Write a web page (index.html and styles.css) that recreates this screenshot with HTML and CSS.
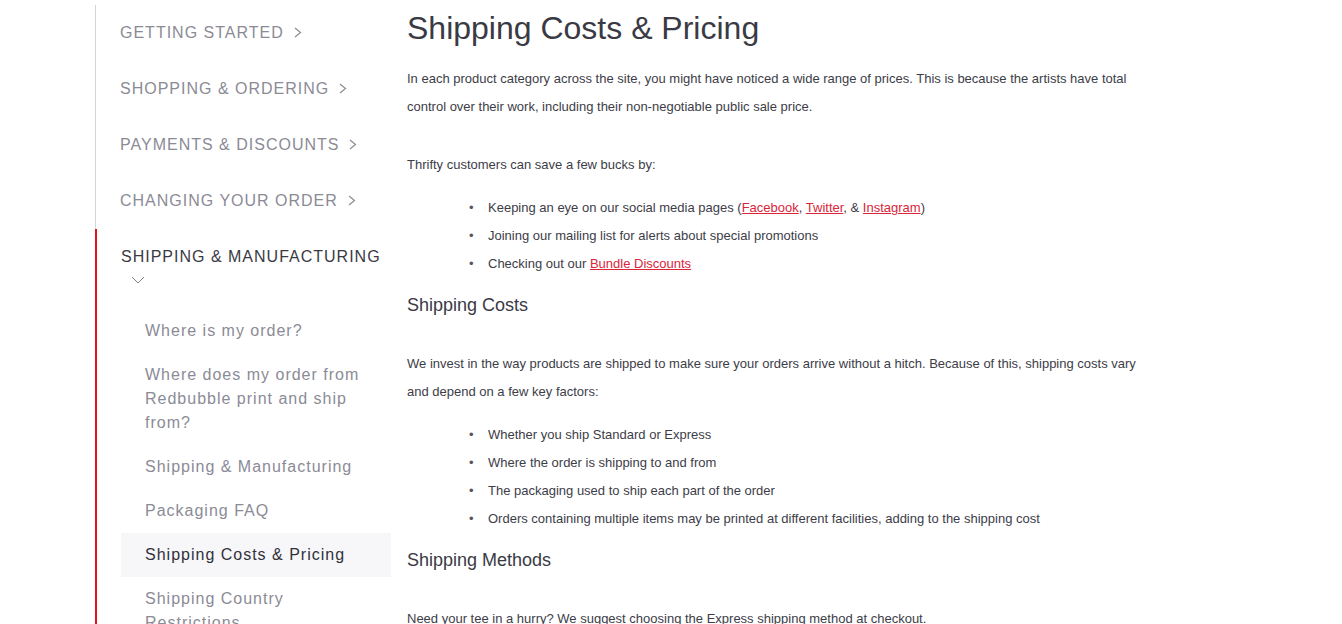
FILE: index.html
```html
<!DOCTYPE html>
<html lang="en">
<head>
    <meta charset="UTF-8">
    <meta name="viewport" content="width=device-width, initial-scale=1.0">
    <title>Shipping Costs &amp; Pricing</title>
    <link rel="stylesheet" href="styles.css">
</head>
<body>
    <div class="page">
        <nav class="sidebar">
            <div class="section">
                <a class="section__title" href="#">GETTING STARTED<svg class="chev" width="8" height="11" viewBox="0 0 8 11"><polyline points="1,1 6.5,5.5 1,10"/></svg></a>
            </div>
            <div class="section">
                <a class="section__title" href="#">SHOPPING &amp; ORDERING<svg class="chev" width="8" height="11" viewBox="0 0 8 11"><polyline points="1,1 6.5,5.5 1,10"/></svg></a>
            </div>
            <div class="section">
                <a class="section__title" href="#">PAYMENTS &amp; DISCOUNTS<svg class="chev" width="8" height="11" viewBox="0 0 8 11"><polyline points="1,1 6.5,5.5 1,10"/></svg></a>
            </div>
            <div class="section">
                <a class="section__title" href="#">CHANGING YOUR ORDER<svg class="chev" width="8" height="11" viewBox="0 0 8 11"><polyline points="1,1 6.5,5.5 1,10"/></svg></a>
            </div>
            <div class="section section_open">
                <a class="section__title" href="#"><span class="nowrap">SHIPPING &amp; MANUFACTURING</span> <svg class="chev chev_down" width="14" height="8" viewBox="0 0 14 8"><polyline points="1,1 7,7 13,1"/></svg></a>
                <ul class="articles">
                    <li><a class="article" href="#">Where is my order?</a></li>
                    <li><a class="article" href="#">Where does my order from Redbubble print and ship from?</a></li>
                    <li><a class="article" href="#">Shipping &amp; Manufacturing</a></li>
                    <li><a class="article" href="#">Packaging FAQ</a></li>
                    <li><a class="article article_current" href="#">Shipping Costs &amp; Pricing</a></li>
                    <li><a class="article" href="#">Shipping Country Restrictions</a></li>
                    <li><a class="article" href="#">Delivery Times</a></li>
                </ul>
            </div>
        </nav>

        <main class="article-body">
            <h1>Shipping Costs &amp; Pricing</h1>
            <p class="lead">In each product category across the site, you might have noticed a wide range of prices. This is because the artists have total control over their work, including their non-negotiable public sale price.</p>
            <p>Thrifty customers can save a few bucks by:</p>
            <ul class="bullets">
                <li>Keeping an eye on our social media pages (<a href="#">Facebook</a>, <a href="#">Twitter</a>, &amp; <a href="#">Instagram</a>)</li>
                <li>Joining our mailing list for alerts about special promotions</li>
                <li>Checking out our <a href="#">Bundle Discounts</a></li>
            </ul>
            <h2>Shipping Costs</h2>
            <p>We invest in the way products are shipped to make sure your orders arrive without a hitch. Because of this, shipping costs vary and depend on a few key factors:</p>
            <ul class="bullets">
                <li>Whether you ship Standard or Express</li>
                <li>Where the order is shipping to and from</li>
                <li>The packaging used to ship each part of the order</li>
                <li>Orders containing multiple items may be printed at different facilities, adding to the shipping cost</li>
            </ul>
            <h2>Shipping Methods</h2>
            <p>Need your tee in a hurry? We suggest choosing the Express shipping method at checkout.</p>
        </main>
    </div>
</body>
</html>
```

FILE: styles.css
```css
body {
    margin: 0;
    background: #fff;
    font-family: 'Liberation Sans', Arial, sans-serif;
    color: #3d3d47;
    overflow: hidden;
}

.page {
    display: flex;
    gap: 16px;
    padding-left: 95px;
}

/* sidebar */

.sidebar {
    width: 296px;
    flex-shrink: 0;
    margin-top: 5px;
}

.section {
    border-left: 1px solid #d4d4d8;
}

.section_open {
    border-left: 2px solid #e4121f;
    padding-bottom: 400px;
}

.section__title {
    display: block;
    padding: 16px 24px 16px 24px;
    font-size: 16px;
    line-height: 24px;
    letter-spacing: 1px;
    color: #8b8b96;
    text-decoration: none;
}

.section_open .section__title {
    color: #3a3a44;
    padding-right: 0;
}

.nowrap {
    white-space: nowrap;
}

.chev {
    margin-left: 10px;
    fill: none;
    stroke: #8b8b96;
    stroke-width: 1.2;
    vertical-align: 0;
}

.chev_down {
    stroke: #7c7c88;
    stroke-width: 1;
    vertical-align: 2px;
}

.articles {
    list-style: none;
    margin: 0 0 0 24px;
    padding: 0;
}

.article {
    display: block;
    padding: 10px 24px;
    font-size: 16px;
    line-height: 24px;
    letter-spacing: 1px;
    color: #8b8b96;
    text-decoration: none;
}

.article_current {
    background: #f7f7f9;
    color: #31313b;
}

/* content */

.article-body {
    width: 740px;
    padding-top: 8px;
    font-size: 13px;
    line-height: 28px;
}

h1 {
    margin: 0 0 17px;
    font-size: 32px;
    line-height: 40px;
    font-weight: normal;
    color: #3a3a44;
}

h2 {
    margin: 0 0 33px;
    font-size: 18px;
    line-height: 24px;
    font-weight: normal;
    color: #3a3a44;
}

p {
    margin: 0 0 15px;
}

.lead {
    margin-bottom: 30px;
}

.bullets {
    list-style: none;
    margin: 0 0 15px;
    padding-left: 81px;
}

.bullets li::before {
    content: "\2022";
    display: inline-block;
    width: 19px;
    margin-left: -19px;
    color: #55555f;
}

a {
    color: #d9263b;
}
```
